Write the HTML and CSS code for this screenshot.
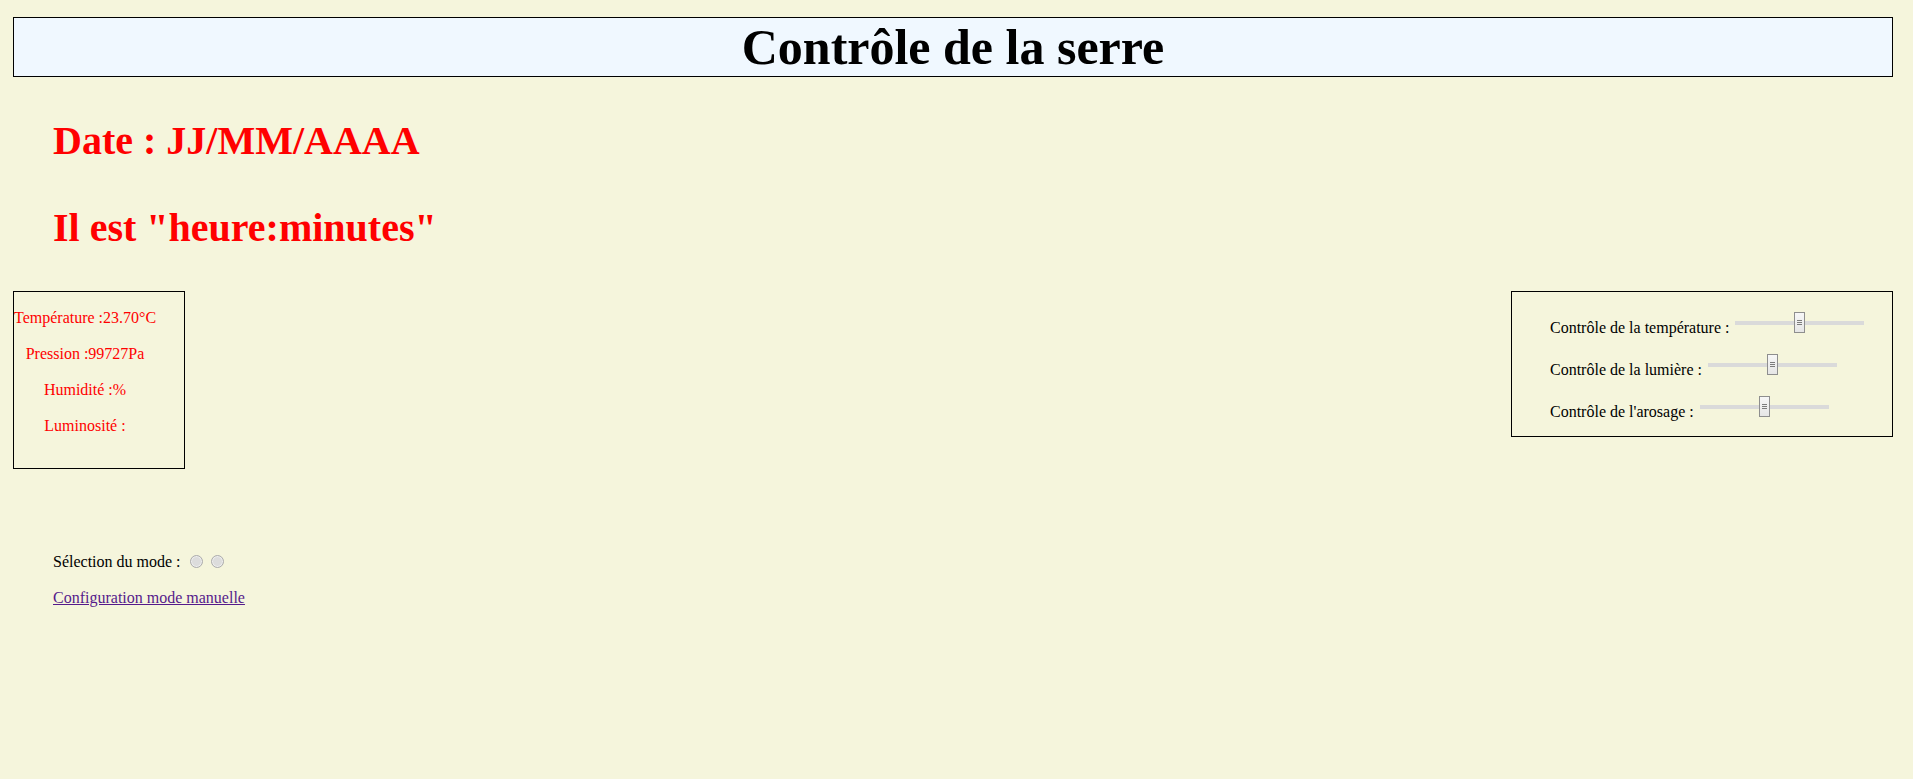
FILE: index.html
```html
<!DOCTYPE html>
<html lang="fr">
<head>
    <meta charset="UTF-8">
    <title>Contrôle de la serre</title>
    <link rel="stylesheet" href="styles.css">
</head>
<body>
    <h1 class="titre">Contrôle de la serre</h1>

    <h2 class="horloge">Date : JJ/MM/AAAA</h2>
    <h2 class="horloge">Il est "heure:minutes"</h2>

    <div class="panneaux">
        <div class="capteurs">
            <p>Température :23.70°C</p>
            <p>Pression :99727Pa</p>
            <p>Humidité :%</p>
            <p>Luminosité :</p>
        </div>

        <div class="commandes">
            <div class="reglage">
                <label for="temp">Contrôle de la température :</label>
                <input type="range" id="temp" min="0" max="100" value="50">
            </div>
            <div class="reglage">
                <label for="lum">Contrôle de la lumière :</label>
                <input type="range" id="lum" min="0" max="100" value="50">
            </div>
            <div class="reglage">
                <label for="eau">Contrôle de l'arosage :</label>
                <input type="range" id="eau" min="0" max="100" value="50">
            </div>
        </div>
    </div>

    <div class="mode">
        <p>Sélection du mode : <input type="radio" name="mode" value="auto"><input type="radio" name="mode" value="manuel"></p>
        <p><a href="#manuel">Configuration mode manuelle</a></p>
    </div>
</body>
</html>
```

FILE: styles.css
```css
body {
    font-family: "Liberation Serif", "Times New Roman", serif;
    font-size: 16px;
    background-color: #f5f5dc;
    color: #000;
    margin: 0;
    padding: 17px 20px 0 13px;
}

.titre {
    font-size: 50px;
    line-height: 58px;
    text-align: center;
    background-color: #f0f8ff;
    border: 1px solid #000;
    margin: 0;
}

.horloge {
    color: #ff0000;
    font-size: 40px;
    margin: 40px 0 40px 40px;
}

/* Capteurs a gauche, reglages a droite */
.panneaux {
    display: flex;
    justify-content: space-between;
    align-items: flex-start;
    margin-top: 40px;
}

.capteurs {
    box-sizing: border-box;
    width: 172px;
    border: 1px solid #000;
    padding: 16px 28px 32px 0;
    display: flex;
    flex-direction: column;
    gap: 16px;
    color: #ff0000;
    text-align: center;
}

.capteurs p {
    margin: 0;
    line-height: 20px;
    white-space: nowrap;
}

.commandes {
    box-sizing: border-box;
    width: 382px;
    border: 1px solid #000;
    padding: 20px 0 14px 38px;
    display: flex;
    flex-direction: column;
    gap: 16px;
}

.reglage {
    display: flex;
    align-items: flex-end;
}

.reglage label {
    line-height: 20px;
    white-space: nowrap;
}

.reglage input[type=range] {
    -webkit-appearance: none;
    appearance: none;
    width: 129px;
    height: 21px;
    margin: 0 0 5px 6px;
    padding: 0;
    background: transparent;
}

.reglage input[type=range]::-webkit-slider-runnable-track {
    height: 4px;
    background: #dadada;
    border: none;
}

.reglage input[type=range]::-webkit-slider-thumb {
    -webkit-appearance: none;
    box-sizing: border-box;
    width: 11px;
    height: 21px;
    margin-top: -8.5px;
    border: 1px solid #8e8e8e;
    background:
        linear-gradient(#7c7c7c, #7c7c7c) 2px 7px / 5px 1px no-repeat,
        linear-gradient(#7c7c7c, #7c7c7c) 2px 9px / 5px 1px no-repeat,
        linear-gradient(#7c7c7c, #7c7c7c) 2px 11px / 5px 1px no-repeat,
        linear-gradient(#f7f7f7, #e6e6e6);
}

.mode {
    margin: 83px 0 0 40px;
    display: flex;
    flex-direction: column;
    gap: 16px;
}

.mode p {
    margin: 0;
    line-height: 20px;
}

.mode input[type=radio] {
    -webkit-appearance: none;
    appearance: none;
    box-sizing: border-box;
    width: 13px;
    height: 13px;
    margin: 3px 3px 0 5px;
    border-radius: 50%;
    border: 1px solid #acacac;
    background: #dcdcdc;
    box-shadow: inset 0 0 0 1px #eeeeee;
    vertical-align: -1px;
}

.mode a {
    color: #551a8b;
}
```
